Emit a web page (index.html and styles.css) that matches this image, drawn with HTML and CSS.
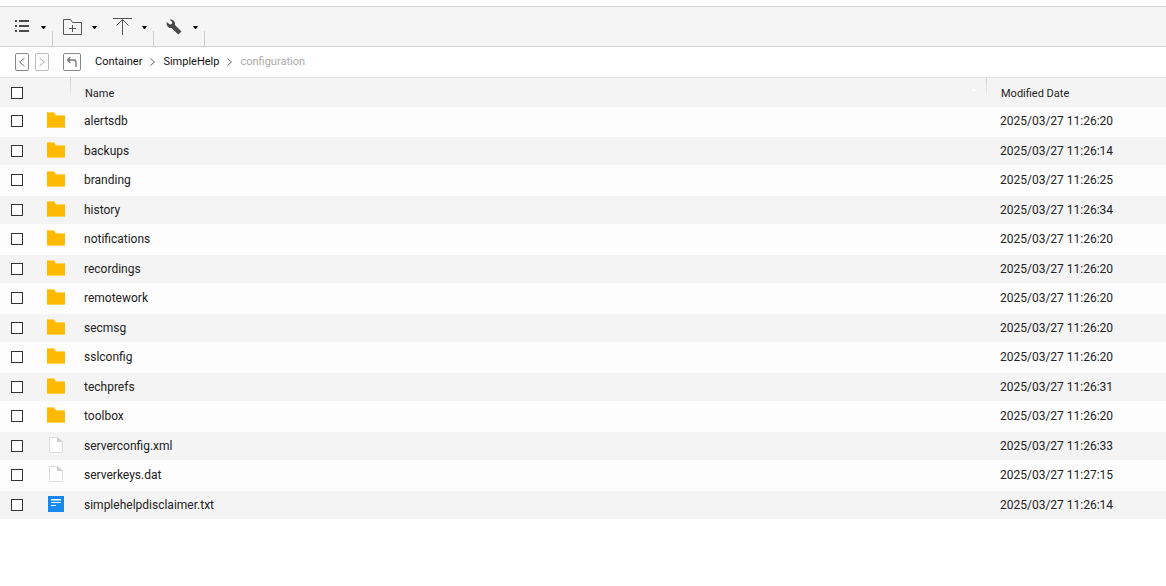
FILE: index.html
```html
<!DOCTYPE html>
<html lang="en">
<head>
    <meta charset="UTF-8">
    <meta name="viewport" content="width=device-width, initial-scale=1.0">
    <title>configuration</title>
    <link rel="stylesheet" href="styles.css">
</head>

<body>
    <div class="toolbar">
        <div class="tool-group">
            <button class="tool view" aria-label="View">
                <svg width="15" height="15" viewBox="0 0 15 15" fill="#4a4a4a"><path d="M0 1h2v2H0zM4 1h10v2H4zM0 6h2v2H0zM4 6h10v2H4zM0 11h2v2H0zM4 11h10v2H4z"/></svg>
                <span class="caret"></span>
            </button>
        </div>
        <div class="tool-group">
            <button class="tool" aria-label="Create folder">
                <svg width="20" height="17" viewBox="0 0 20 17" fill="none" stroke="#555"><path d="M.5 16.500V1.500h7l2 3h9v12zM9.500 7v7M6 10.500h7"/></svg>
                <span class="caret"></span>
            </button>
            <button class="tool" aria-label="Upload">
                <svg width="20" height="17" viewBox="0 0 20 17" fill="none" stroke="#555"><path d="M0 .5h19M9.500 1v16M3.500 7.500l6-6 6 6"/></svg>
                <span class="caret"></span>
            </button>
        </div>
        <div class="tool-group">
            <button class="tool tools" aria-label="Tools">
                <svg width="16" height="17" viewBox="0 -1 16 17" fill="#4a4a4a"><path d="M3.500 .5L6.200 3l-.4 2-2 .6L.8 3C0 6 2 9.500 5.500 9l6.800 6.500 3.200-3L9 6C9.800 3 7 0 3.500 .5z"/></svg>
                <span class="caret"></span>
            </button>
        </div>
    </div>

    <nav class="path-bar">
        <button class="nav-btn" aria-label="Back">
            <svg width="8" height="10" viewBox="0 0 8 10" fill="none" stroke="currentColor"><path d="M6.500 1l-5 4 5 4"/></svg>
        </button>
        <button class="nav-btn" aria-label="Forward" disabled>
            <svg width="8" height="10" viewBox="0 0 8 10" fill="none" stroke="currentColor"><path d="M1.500 1l5 4-5 4"/></svg>
        </button>
        <button class="nav-btn up" aria-label="Up one level">
            <svg width="12" height="12" viewBox="0 0 12 12" fill="none" stroke="currentColor"><path d="M4.500 1L1.500 4l3 3M1.500 4h6q2.500 0 2.500 2.500V11" stroke-width="1.300"/></svg>
        </button>
        <div class="crumbs">
            <a href="#">Container</a>
            <svg width="5" height="8" viewBox="0 0 5 8" fill="none" stroke="#666"><path d="M.5 .5l4 3.500-4 3.500"/></svg>
            <a href="#">SimpleHelp</a>
            <svg width="5" height="8" viewBox="0 0 5 8" fill="none" stroke="#666"><path d="M.5 .5l4 3.500-4 3.500"/></svg>
            <span class="current">configuration</span>
        </div>
    </nav>

    <svg class="defs" aria-hidden="true">
        <symbol id="folder" viewBox="0 0 18 16"><path d="M0 0h7l2 3h9v13H0z" fill="#ffd45c"/><path d="M0 1h7l2 3h9v11H0z" fill="#ffb900"/></symbol>
        <symbol id="file" viewBox="0 0 18 16"><path d="M2.500 .5h8l5 4v11h-13z" fill="#fff" stroke="#dadcdf"/><path d="M10 0v5h6z" fill="#ced1d4"/></symbol>
        <symbol id="text" viewBox="0 0 18 16"><path d="M1 0h16v16H1z" fill="#1688f0"/><path d="M4 3h10v1H4zM4 6h10v1H4zM4 9h5v1H4z" fill="#fff"/><path d="M4 4h10v1H4z" fill="#8cc4f8"/></symbol>
    </svg>

    <table class="files">
        <thead>
            <tr>
                <th class="check"><input type="checkbox" id="all" aria-label="Select all"></th>
                <th class="icon"></th>
                <th class="name"><div class="head"><span>Name</span><span class="sort"></span></div></th>
                <th class="date"><div class="head">Modified Date</div></th>
            </tr>
        </thead>
        <tbody id="rows"></tbody>
    </table>

    <script>
        const files = [
            ["folder", "alertsdb", "2025/03/27 11:26:20"],
            ["folder", "backups", "2025/03/27 11:26:14"],
            ["folder", "branding", "2025/03/27 11:26:25"],
            ["folder", "history", "2025/03/27 11:26:34"],
            ["folder", "notifications", "2025/03/27 11:26:20"],
            ["folder", "recordings", "2025/03/27 11:26:20"],
            ["folder", "remotework", "2025/03/27 11:26:20"],
            ["folder", "secmsg", "2025/03/27 11:26:20"],
            ["folder", "sslconfig", "2025/03/27 11:26:20"],
            ["folder", "techprefs", "2025/03/27 11:26:31"],
            ["folder", "toolbox", "2025/03/27 11:26:20"],
            ["file", "serverconfig.xml", "2025/03/27 11:26:33"],
            ["file", "serverkeys.dat", "2025/03/27 11:27:15"],
            ["text", "simplehelpdisclaimer.txt", "2025/03/27 11:26:14"]
        ];

        document.getElementById("rows").innerHTML = files.map(([type, name, date], i) => `
            <tr>
                <td class="check"><input type="checkbox" id="file${i}"></td>
                <td class="icon"><svg width="18" height="16"><use href="#${type}"/></svg></td>
                <td class="name"><label for="file${i}">${name}</label></td>
                <td class="date">${date}</td>
            </tr>`).join("");

        // Select all
        document.getElementById("all").addEventListener("change", function() {
            document.querySelectorAll("#rows input").forEach(box => box.checked = this.checked);
        });
    </script>
</body>
</html>
```
FILE: styles.css
```css
* {
    box-sizing: border-box;
}

body {
    margin: 0;
    padding-top: 6px;
    background-color: #fff;
    color: #222;
    font-family: Roboto, Arial, sans-serif;
    font-size: 12px;
}

button {
    margin: 0;
    padding: 0;
    border: none;
    background: none;
    color: inherit;
}

svg {
    display: block;
    flex: none;
}

.defs {
    display: none;
}

/* Toolbar */
.toolbar {
    display: flex;
    height: 41px;
    background-color: #f5f5f5;
    border-top: 1px solid #d2d2d2;
    border-bottom: 1px solid #d2d2d2;
}

.tool-group {
    display: flex;
    gap: 16px;
    padding: 0 7px 0 10px;
    background: linear-gradient(#ccc, #ccc) right bottom / 1px 15px no-repeat;
}

.tool-group:first-child {
    padding-left: 15px;
}

.tool {
    display: flex;
    align-items: center;
    gap: 9px;
}

.view {
    gap: 11px;
}

.tools {
    padding-left: 2px;
    gap: 11px;
}

.caret {
    width: 5px;
    height: 3px;
    margin-top: 2px;
    background-color: #000;
    clip-path: polygon(0 0, 100% 0, 60% 100%, 40% 100%);
}

/* Path */
.path-bar {
    display: flex;
    align-items: center;
    height: 31px;
    padding-left: 15px;
    border-bottom: 1px solid #e4e4e4;
}

.nav-btn {
    display: flex;
    align-items: center;
    justify-content: center;
    width: 14px;
    height: 18px;
    margin-right: 6px;
    border: 1px solid #888;
    border-radius: 2px;
    color: #777;
}

.nav-btn:disabled {
    border-color: #bbb;
    color: #aaa;
}

.up {
    width: 18px;
    margin: 0 14px 0 8px;
}

.crumbs {
    display: flex;
    align-items: center;
    gap: 8px;
    padding-bottom: 2px;
    font-size: 11px;
}

.crumbs svg {
    margin-top: 2px;
}

.crumbs a {
    color: #111;
    text-decoration: none;
}

.current {
    color: #aaa;
}

/* File list */
.files {
    width: 100%;
    table-layout: fixed;
    border-collapse: collapse;
}

th,
td {
    padding: 0;
    text-align: left;
    font-weight: normal;
    vertical-align: top;
}

thead {
    background-color: #f4f4f4;
    font-size: 11px;
}

th {
    height: 29px;
}

th.name,
th.date {
    background: linear-gradient(#ccc, #f4f4f4) left top / 1px 20px no-repeat;
}

th .head {
    display: flex;
    justify-content: space-between;
    padding: 3px 9px 0 15px;
    line-height: 26px;
}

.sort {
    align-self: flex-start;
    margin-top: 7px;
    border: 3px solid transparent;
    border-top: none;
    border-bottom-color: #fff;
}

td {
    height: 28px;
    line-height: 28px;
}

tbody tr {
    background-color: #fdfdfd;
}

tbody tr:nth-child(even) {
    background-color: #f4f4f4;
}

tbody tr:nth-child(odd) td {
    height: 31px;
    padding-top: 1px;
}

tbody tr:nth-child(odd):first-child td {
    height: 30px;
    padding-top: 0;
}

.check {
    width: 47px;
}

.icon {
    width: 23px;
}

.icon svg {
    margin-top: 5px;
}

.date {
    width: 180px;
}

td.name,
td.date {
    padding-left: 14px;
}

input[type="checkbox"] {
    appearance: none;
    display: block;
    width: 12px;
    height: 12px;
    margin: 8px 0 0 11px;
    border: 1px solid #333;
    background-color: #fff;
}

th input[type="checkbox"] {
    margin-top: 9px;
}

input[type="checkbox"]:checked {
    background-color: #1688f0;
}
```
